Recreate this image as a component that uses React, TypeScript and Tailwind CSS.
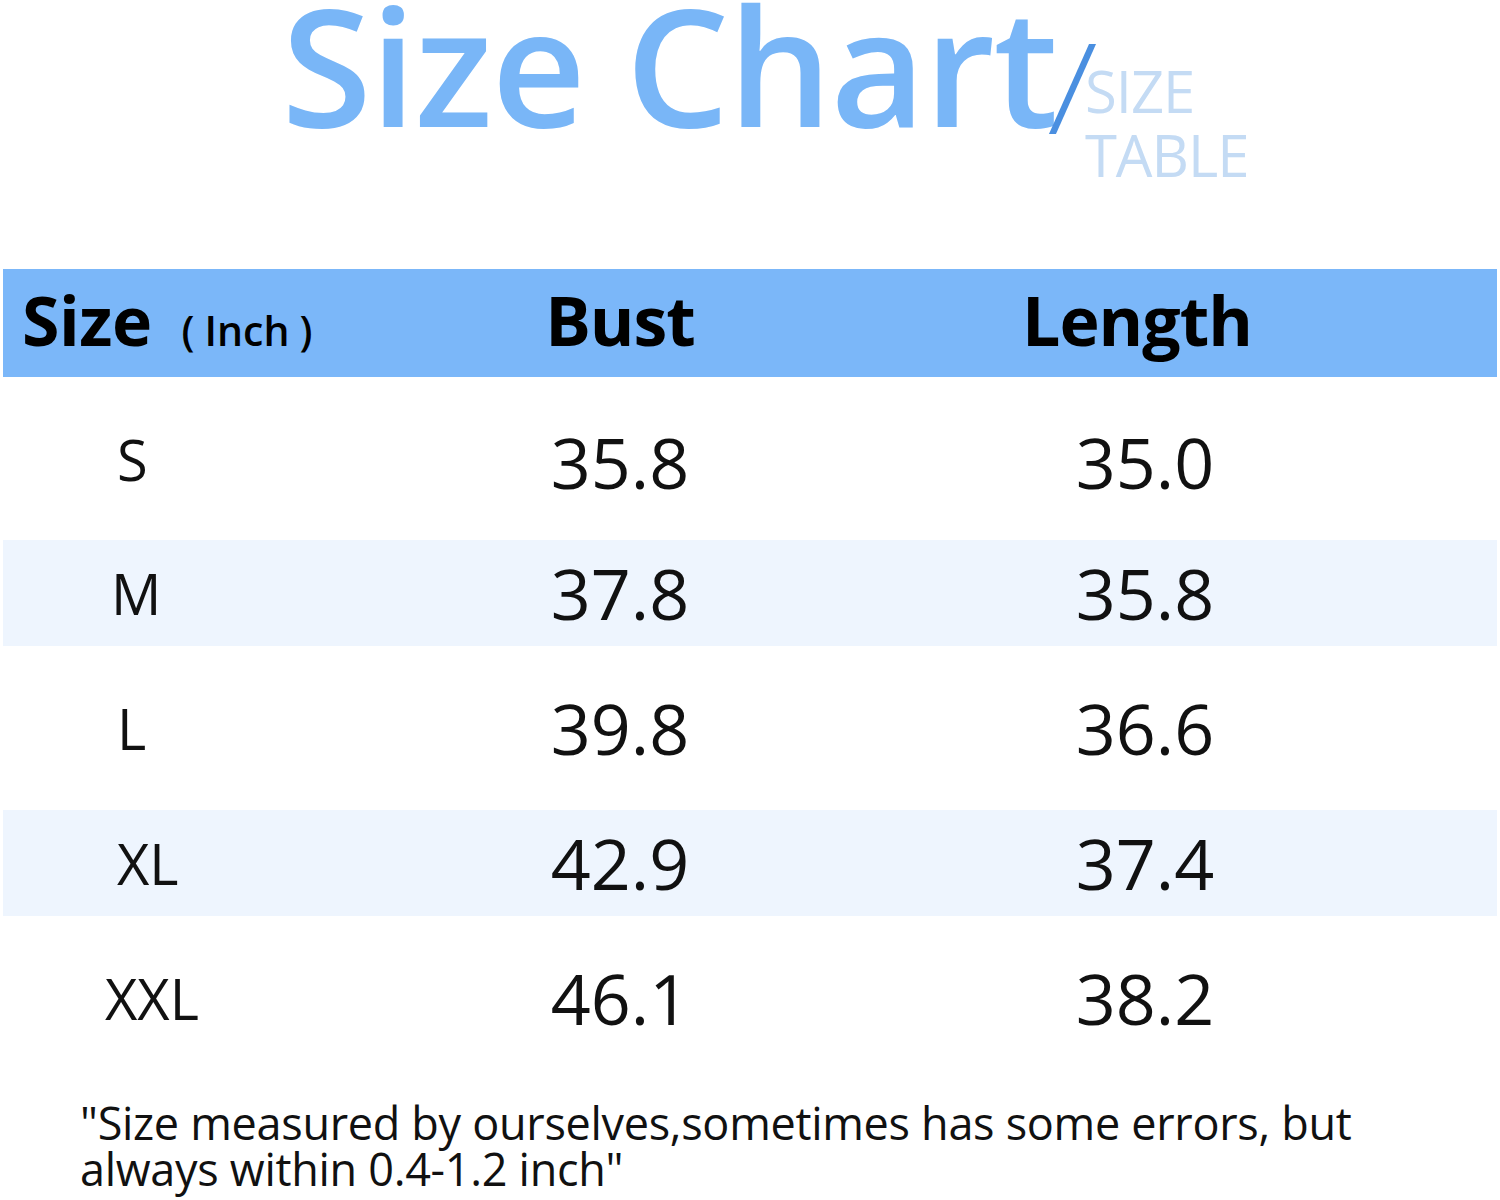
const rows = [
  { size: "S", bust: "35.8", length: "35.0", band: false, h: "h-[163px]", pad: "pl-[114px]", nudge: "pt-[8px]" },
  { size: "M", bust: "37.8", length: "35.8", band: true, h: "h-[106px]", pad: "pl-[108px]", nudge: "pt-0" },
  { size: "L", bust: "39.8", length: "36.6", band: false, h: "h-[164px]", pad: "pl-[114px]", nudge: "pt-0" },
  { size: "XL", bust: "42.9", length: "37.4", band: true, h: "h-[106px]", pad: "pl-[114px]", nudge: "pt-0" },
  { size: "XXL", bust: "46.1", length: "38.2", band: false, h: "h-[164px]", pad: "pl-[102px]", nudge: "pt-0" },
];

export default function App() {
  return (
    <div className="w-[1500px] h-[1200px] bg-white overflow-hidden font-['Open_Sans',sans-serif] text-[#111]">
      {/* title */}
      <div className="h-[269px] flex justify-center pl-[30px] pt-[1px]">
        <div className="flex items-start">
          <h1 className="text-[164px] leading-[150px] font-semibold tracking-[-1.5px] text-[#79b6f7] mt-[-12px]">
            Size Chart
          </h1>
          <div className="w-[7px] h-[90px] bg-[#4a8fe0] skew-x-[-24deg] mt-[43px] ml-[12px]" />
          <div className="flex flex-col mt-[58px] ml-[9px] text-[#c4dbf4] text-[58px] leading-[64px] tracking-[-1px]">
            <span>SIZE</span>
            <span>TABLE</span>
          </div>
        </div>
      </div>

      {/* table */}
      <div className="mx-[3px]">
        <div className="h-[108px] bg-[#7bb7f9] grid grid-cols-[377px_480px_570px] items-center font-bold text-black pb-[8px]">
          <div className="pl-[19px] flex items-baseline gap-[30px]">
            <span className="text-[68px] tracking-[-0.5px]">Size</span>
            <span className="text-[41px] font-semibold flex gap-[10px]">
              <span>(</span>
              <span>Inch</span>
              <span>)</span>
            </span>
          </div>
          <div className="text-center text-[68px] tracking-[-1px]">Bust</div>
          <div className="text-center text-[68px] tracking-[-1px] pr-[16px]">Length</div>
        </div>
        {rows.map((r) => (
          <div
            key={r.size}
            className={`${r.h} ${r.band ? "bg-[#eef5fe]" : "bg-white"} grid grid-cols-[377px_480px_570px] items-center`}
          >
            <div className={`${r.pad} text-[56px]`}>{r.size}</div>
            <div className={`${r.nudge} text-center text-[70px]`}>{r.bust}</div>
            <div className={`${r.nudge} text-center text-[70px]`}>{r.length}</div>
          </div>
        ))}
      </div>

      {/* note */}
      <div className="pl-[80px] pt-[20px] text-[45px] leading-[46px] tracking-[-0.3px] w-[1440px]">
        "Size measured by ourselves,sometimes has some errors, but
        <br />
        always within 0.4-1.2 inch"
      </div>
    </div>
  );
}
